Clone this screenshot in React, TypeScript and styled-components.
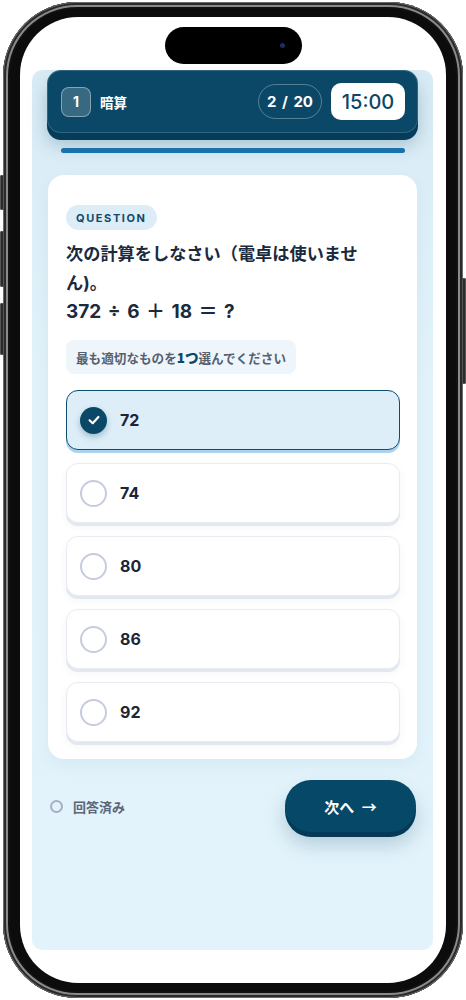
import styled, { createGlobalStyle } from 'styled-components'

const GlobalStyle = createGlobalStyle`
    html, body {
        margin: 0;
        padding: 0;
        background: #ffffff;
    }
    * {
        box-sizing: border-box;
    }
    body {
        font-family: 'Inter', 'Noto Sans CJK JP', sans-serif;
    }
`

const choices = ['72', '74', '80', '86', '92']

function CheckMark() {
    return (
        <svg width="14" height="14" viewBox="0 0 14 14" fill="none">
            <path
                d="M2.6 7.3 L5.7 10.2 L11.4 4"
                stroke="#ffffff"
                strokeWidth="2.2"
                strokeLinecap="round"
                strokeLinejoin="round"
            />
        </svg>
    )
}

export default function App() {
    const selected = '72'

    return (
        <>
            <GlobalStyle />
            <Phone>
                <SideButton side="left" top={173} length={35} />
                <SideButton side="left" top={229} length={56} />
                <SideButton side="left" top={301} length={52} />
                <SideButton side="right" top={276} length={106} />
                <Screen>
                    <Island>
                        <Lens />
                    </Island>
                    <AppArea>
                        <Header>
                            <Section>
                                <SectionNo>1</SectionNo>
                                <SectionName>暗算</SectionName>
                            </Section>
                            <Counter>2 / 20</Counter>
                            <Timer>15:00</Timer>
                        </Header>
                        <Progress />

                        <Card>
                            <Chip>QUESTION</Chip>
                            <QuestionText>
                                次の計算をしなさい（電卓は使いません)。
                                <br />
                                <Formula>372 ÷ 6 ＋ 18 ＝ ?</Formula>
                            </QuestionText>
                            <Hint>
                                最も適切なものを<strong>1つ</strong>選んでください
                            </Hint>
                            <Options>
                                {choices.map((c) => (
                                    <Option key={c} active={c === selected}>
                                        <Radio active={c === selected}>
                                            {c === selected && <CheckMark />}
                                        </Radio>
                                        <span>{c}</span>
                                    </Option>
                                ))}
                            </Options>
                        </Card>

                        <Footer>
                            <Answered>
                                <Dot />
                                回答済み
                            </Answered>
                            <NextButton>次へ →</NextButton>
                        </Footer>
                    </AppArea>
                </Screen>
            </Phone>
        </>
    )
}

const Phone = styled.div`
    position: relative;
    width: 460px;
    height: 996px;
    margin: 2px 3px;
    padding: 15px 17px;
    border-radius: 74px;
    background: #0c0c0c;
    box-shadow:
        inset 0 0 0 1px #6b6b6b,
        inset 0 0 0 3px #2a2a2a,
        inset 0 0 0 5px #8a8a8a,
        inset 0 0 0 7px #111111;
`

const SideButton = styled.div<{ side: 'left' | 'right'; top: number; length: number }>`
    position: absolute;
    top: ${({ top }) => top}px;
    ${({ side }) => (side === 'left' ? 'left: -3px;' : 'right: -3px;')}
    width: 4px;
    height: ${({ length }) => length}px;
    border-radius: 2px;
    background: #2b2b2b;
    box-shadow: inset 0 0 0 1px #555;
`

const Screen = styled.div`
    position: relative;
    width: 426px;
    height: 966px;
    border-radius: 58px;
    background: #ffffff;
    padding: 53px 13px 33px 12px;
    overflow: hidden;
`

const Island = styled.div`
    position: absolute;
    top: 10px;
    left: 145px;
    width: 137px;
    height: 37px;
    border-radius: 19px;
    background: #000;
    display: flex;
    align-items: center;
    justify-content: flex-end;
    padding-right: 17px;
`

const Lens = styled.div`
    width: 5px;
    height: 5px;
    border-radius: 50%;
    background: #1b2f5c;
`

const AppArea = styled.div`
    height: 100%;
    border-radius: 10px;
    background: linear-gradient(180deg, #d8ecf6 0%, #e1f2fa 35%, #e2f3fb 100%);
    padding: 0 16px;
    display: flex;
    flex-direction: column;
`

const Header = styled.div`
    margin: 0 -1px;
    height: 63px;
    border-radius: 14px;
    background: #0b4868;
    border: 1px solid rgba(255, 255, 255, 0.16);
    box-shadow:
        0 7px 0 #053c59,
        0 12px 18px rgba(5, 60, 89, 0.25);
    display: flex;
    align-items: center;
    padding: 0 12px 0 13px;
    gap: 9px;
`

const Section = styled.div`
    display: flex;
    align-items: center;
    gap: 9px;
    flex: 1;
`

const SectionNo = styled.div`
    width: 30px;
    height: 30px;
    border-radius: 8px;
    border: 1px solid rgba(255, 255, 255, 0.4);
    background: rgba(255, 255, 255, 0.18);
    color: #fff;
    font-size: 14px;
    font-weight: 700;
    display: flex;
    align-items: center;
    justify-content: center;
`

const SectionName = styled.span`
    color: #fff;
    font-family: 'Noto Sans CJK JP', sans-serif;
    font-size: 13.5px;
    font-weight: 700;
`

const Counter = styled.div`
    height: 35px;
    padding: 0 8px;
    border-radius: 18px;
    border: 1px solid rgba(255, 255, 255, 0.3);
    color: #fff;
    font-size: 15px;
    font-weight: 700;
    word-spacing: 2px;
    display: flex;
    align-items: center;
`

const Timer = styled.div`
    width: 74px;
    height: 37px;
    border-radius: 10px;
    background: #fff;
    color: #0b4868;
    font-size: 20px;
    font-weight: 500;
    display: flex;
    align-items: center;
    justify-content: center;
`

const Progress = styled.div`
    margin: 15px 12px 0 13px;
    height: 5px;
    border-radius: 3px;
    background: #1a72ab;
`

const Card = styled.div`
    margin-top: 22px;
    background: #fff;
    border-radius: 16px;
    padding: 30px 17px 17px 18px;
    box-shadow: 0 6px 16px rgba(30, 80, 120, 0.06);
`

const Chip = styled.div`
    display: inline-flex;
    align-items: center;
    height: 25px;
    padding: 0 10px;
    border-radius: 13px;
    background: #dcedf8;
    color: #134a6a;
    font-size: 11px;
    font-weight: 700;
    letter-spacing: 1.6px;
`

const QuestionText = styled.div`
    margin-top: 9px;
    max-width: 304px;
    color: #1b2a3c;
    font-family: 'Inter', 'Noto Sans CJK JP', sans-serif;
    font-size: 17.2px;
    font-weight: 700;
    line-height: 29px;
`

const Formula = styled.span`
    font-size: 19px;
    word-spacing: 2px;
`

const Hint = styled.div`
    display: inline-flex;
    align-items: center;
    margin-top: 14px;
    height: 34px;
    padding: 0 10px;
    border-radius: 8px;
    background: #eef6fc;
    color: #56606e;
    font-family: 'Noto Sans CJK JP', sans-serif;
    font-size: 12.6px;
    font-weight: 700;

    strong {
        color: #0b4868;
        font-size: 13.5px;
    }
`

const Options = styled.div`
    margin-top: 16px;
    display: flex;
    flex-direction: column;
    gap: 13px;
`

const Option = styled.div<{ active: boolean }>`
    height: 60px;
    border-radius: 12px;
    display: flex;
    align-items: center;
    gap: 13px;
    padding-left: 13px;
    background: ${({ active }) => (active ? '#ddeef9' : '#ffffff')};
    border: ${({ active }) => (active ? '1.5px solid #104c6c' : '1px solid #e8ecf2')};
    box-shadow: ${({ active }) =>
        active ? '0 3px 0 #a9d3ee' : '0 3px 0 #e3e7ef, 0 4px 8px rgba(40, 60, 100, 0.05)'};

    span {
        color: #1c2536;
        font-size: 16px;
        font-weight: 700;
    }
`

const Radio = styled.div<{ active: boolean }>`
    width: 27px;
    height: 27px;
    border-radius: 50%;
    display: flex;
    align-items: center;
    justify-content: center;
    background: ${({ active }) => (active ? '#0b4868' : '#ffffff')};
    border: ${({ active }) => (active ? 'none' : '2px solid #c6cbdd')};
    box-shadow: ${({ active }) => (active ? '0 3px 6px rgba(11, 72, 104, 0.3)' : 'none')};
`

const Footer = styled.div`
    margin-top: 21px;
    display: flex;
    align-items: center;
    justify-content: space-between;
    padding: 0 1px 0 2px;
`

const Answered = styled.div`
    display: flex;
    align-items: center;
    gap: 10px;
    margin-top: -4px;
    color: #5c6677;
    font-family: 'Noto Sans CJK JP', sans-serif;
    font-size: 13px;
    font-weight: 700;
`

const Dot = styled.div`
    width: 13px;
    height: 13px;
    border-radius: 50%;
    border: 2px solid #a6aec6;
`

const NextButton = styled.button`
    width: 131px;
    height: 52px;
    margin-bottom: 5px;
    border: none;
    border-radius: 26px;
    background: #064868;
    color: #fff;
    font-family: 'Noto Sans CJK JP', sans-serif;
    font-size: 15px;
    font-weight: 700;
    word-spacing: 4px;
    box-shadow:
        0 5px 0 #043a57,
        0 12px 20px rgba(5, 60, 89, 0.22);
`
